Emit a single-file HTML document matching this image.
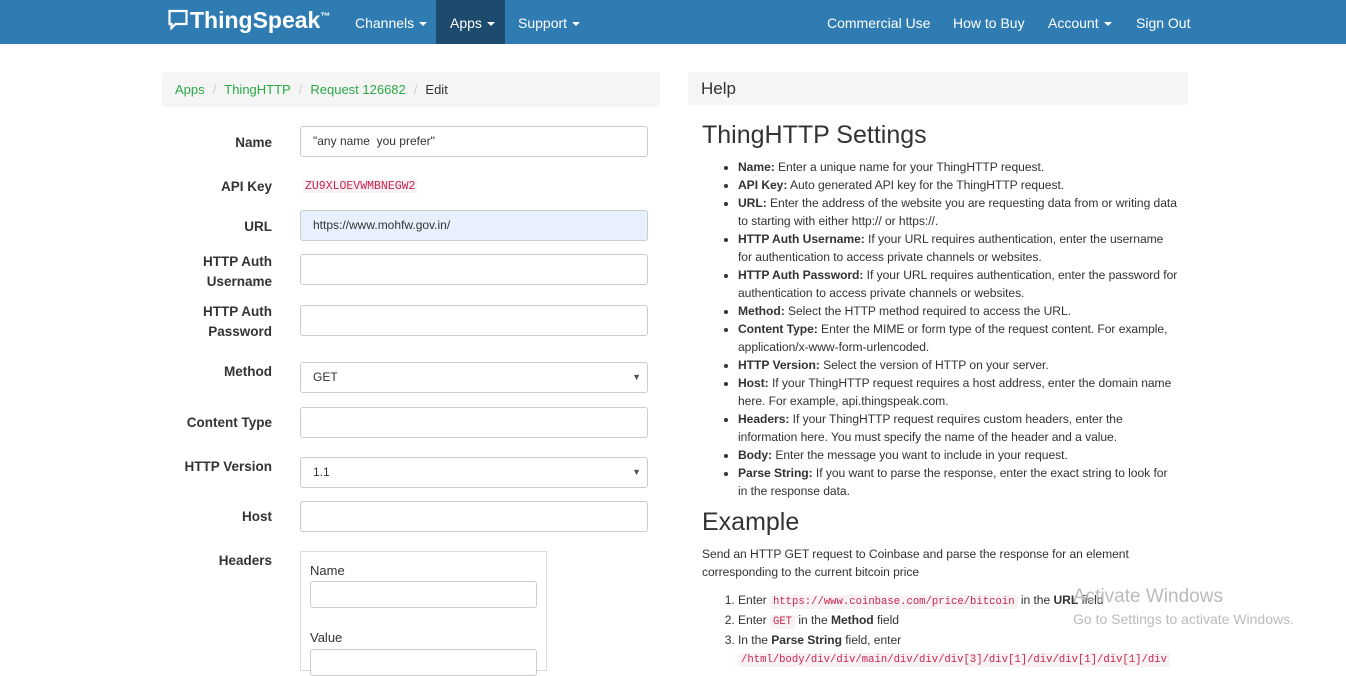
<!DOCTYPE html>
<html><head><meta charset="utf-8"><style>
*{box-sizing:border-box;margin:0;padding:0}
body{width:1346px;height:664px;overflow:hidden;background:#fff;font-family:"Liberation Sans",sans-serif;color:#333;position:relative}
.nav{position:absolute;left:0;top:0;width:1346px;height:44px;background:#2f7cb2}
.nav a{position:absolute;top:0;height:44px;line-height:46px;color:#fff;font-size:14px;text-decoration:none}
.car{display:inline-block;border-left:4px solid transparent;border-right:4px solid transparent;border-top:4px solid #fff;vertical-align:middle;margin-left:5px}
.logo{position:absolute;left:168px;top:7px;color:#fff;font-weight:bold;font-size:23px;white-space:nowrap}
.bc{position:absolute;left:162px;top:72px;width:498px;height:35px;background:#f5f5f5;border-radius:3px;font-size:13px;line-height:36px;padding-left:13px}
.bc a{color:#2aa845}.bc .s{color:#ccc;margin:0 8px}
.lbl{position:absolute;right:1074px;font-size:13.5px;font-weight:bold;text-align:right;line-height:20px;color:#333}
.in{position:absolute;left:300px;width:348px;height:31px;border:1px solid #ccc;border-radius:3px;font-size:12px;line-height:29px;padding-left:12px;background:#fff}
.sel::after{content:"▼";position:absolute;right:6px;top:0;font-size:9px;color:#555}
.help{position:absolute;left:688px;top:72px;width:500px;height:33px;background:#f5f5f5;border-radius:3px;font-size:17px;line-height:33px;padding-left:13px}
h2{position:absolute;left:702px;font-weight:normal;font-size:25px;color:#333}
ul,ol{position:absolute;left:738px;width:440px;font-size:12.1px;line-height:18px;letter-spacing:-0.05px}
code{font-family:"Liberation Mono",monospace;font-size:10.6px;color:#c7254e;background:#f9f2f4;padding:1px 3px;border-radius:3px;letter-spacing:0}
p.t{position:absolute;left:702px;top:545px;width:440px;font-size:12.1px;line-height:18px;letter-spacing:-0.05px}
</style></head><body>
<div class="nav">
<div class="logo"><svg width="20" height="22" viewBox="0 0 20 22" style="vertical-align:-3px;margin-right:2px"><path d="M1.5 2h17v13h-11l-4 4v-4h-2z" fill="none" stroke="#fff" stroke-width="2.2"/></svg>ThingSpeak<sup style="font-size:10px">™</sup></div>
<a style="left:355px">Channels<span class="car"></span></a>
<a style="left:436px;width:69px;background:#1d4b6d;padding-left:14px">Apps<span class="car"></span></a>
<a style="left:518px">Support<span class="car"></span></a>
<a style="left:827px">Commercial Use</a>
<a style="left:953px">How to Buy</a>
<a style="left:1048px">Account<span class="car"></span></a>
<a style="left:1136px">Sign Out</a>
</div>
<div class="bc"><a>Apps</a><span class="s">/</span><a>ThingHTTP</a><span class="s">/</span><a>Request 126682</a><span class="s">/</span>Edit</div>

<div class="lbl" style="top:133px">Name</div><div class="in" style="top:126px">"any name &nbsp;you prefer"</div>
<div class="lbl" style="top:177px">API Key</div><div style="position:absolute;left:303px;top:180px;font-family:'Liberation Mono',monospace;font-size:11.5px;color:#c7254e;background:#f9f2f4;padding:0 2px">ZU9XLOEVWMBNEGW2</div>
<div class="lbl" style="top:217px">URL</div><div class="in" style="top:210px;background:#e8f0fe">https://www.mohfw.gov.in/</div>
<div class="lbl" style="top:252px">HTTP Auth<br>Username</div><div class="in" style="top:254px"></div>
<div class="lbl" style="top:302px">HTTP Auth<br>Password</div><div class="in" style="top:305px"></div>
<div class="lbl" style="top:362px">Method</div><div class="in sel" style="top:362px">GET</div>
<div class="lbl" style="top:413px">Content Type</div><div class="in" style="top:407px"></div>
<div class="lbl" style="top:457px">HTTP Version</div><div class="in sel" style="top:457px">1.1</div>
<div class="lbl" style="top:507px">Host</div><div class="in" style="top:501px"></div>
<div class="lbl" style="top:551px">Headers</div>
<div style="position:absolute;left:300px;top:551px;width:247px;height:120px;border:1px solid #ddd"></div>
<div style="position:absolute;left:310px;top:563px;font-size:13px">Name</div>
<div class="in" style="top:581px;left:310px;width:227px;height:27px"></div>
<div style="position:absolute;left:310px;top:630px;font-size:13px">Value</div>
<div class="in" style="top:649px;left:310px;width:227px;height:27px"></div>

<div class="help">Help</div>
<h2 style="top:121px">ThingHTTP Settings</h2>
<ul style="top:158px">
<li><b>Name:</b> Enter a unique name for your ThingHTTP request.</li>
<li><b>API Key:</b> Auto generated API key for the ThingHTTP request.</li>
<li><b>URL:</b> Enter the address of the website you are requesting data from or writing data to starting with either http:// or https://.</li>
<li><b>HTTP Auth Username:</b> If your URL requires authentication, enter the username for authentication to access private channels or websites.</li>
<li><b>HTTP Auth Password:</b> If your URL requires authentication, enter the password for authentication to access private channels or websites.</li>
<li><b>Method:</b> Select the HTTP method required to access the URL.</li>
<li><b>Content Type:</b> Enter the MIME or form type of the request content. For example, application/x-www-form-urlencoded.</li>
<li><b>HTTP Version:</b> Select the version of HTTP on your server.</li>
<li><b>Host:</b> If your ThingHTTP request requires a host address, enter the domain name here. For example, api.thingspeak.com.</li>
<li><b>Headers:</b> If your ThingHTTP request requires custom headers, enter the information here. You must specify the name of the header and a value.</li>
<li><b>Body:</b> Enter the message you want to include in your request.</li>
<li><b>Parse String:</b> If you want to parse the response, enter the exact string to look for in the response data.</li>
</ul>
<h2 style="top:508px">Example</h2>
<p class="t">Send an HTTP GET request to Coinbase and parse the response for an element corresponding to the current bitcoin price</p>
<ol style="top:591px;width:460px">
<li>Enter <code>https://www.coinbase.com/price/bitcoin</code> in the <b>URL</b> field</li>
<li>Enter <code>GET</code> in the <b>Method</b> field</li>
<li>In the <b>Parse String</b> field, enter <code>/html/body/div/div/main/div/div/div[3]/div[1]/div/div[1]/div[1]/div</code></li>
</ol>
<div style="position:absolute;left:1073px;top:586px;font-size:19px;color:#bbb">Activate Windows</div>
<div style="position:absolute;left:1073px;top:611px;font-size:14px;color:#bbb">Go to Settings to activate Windows.</div>
</body></html>
